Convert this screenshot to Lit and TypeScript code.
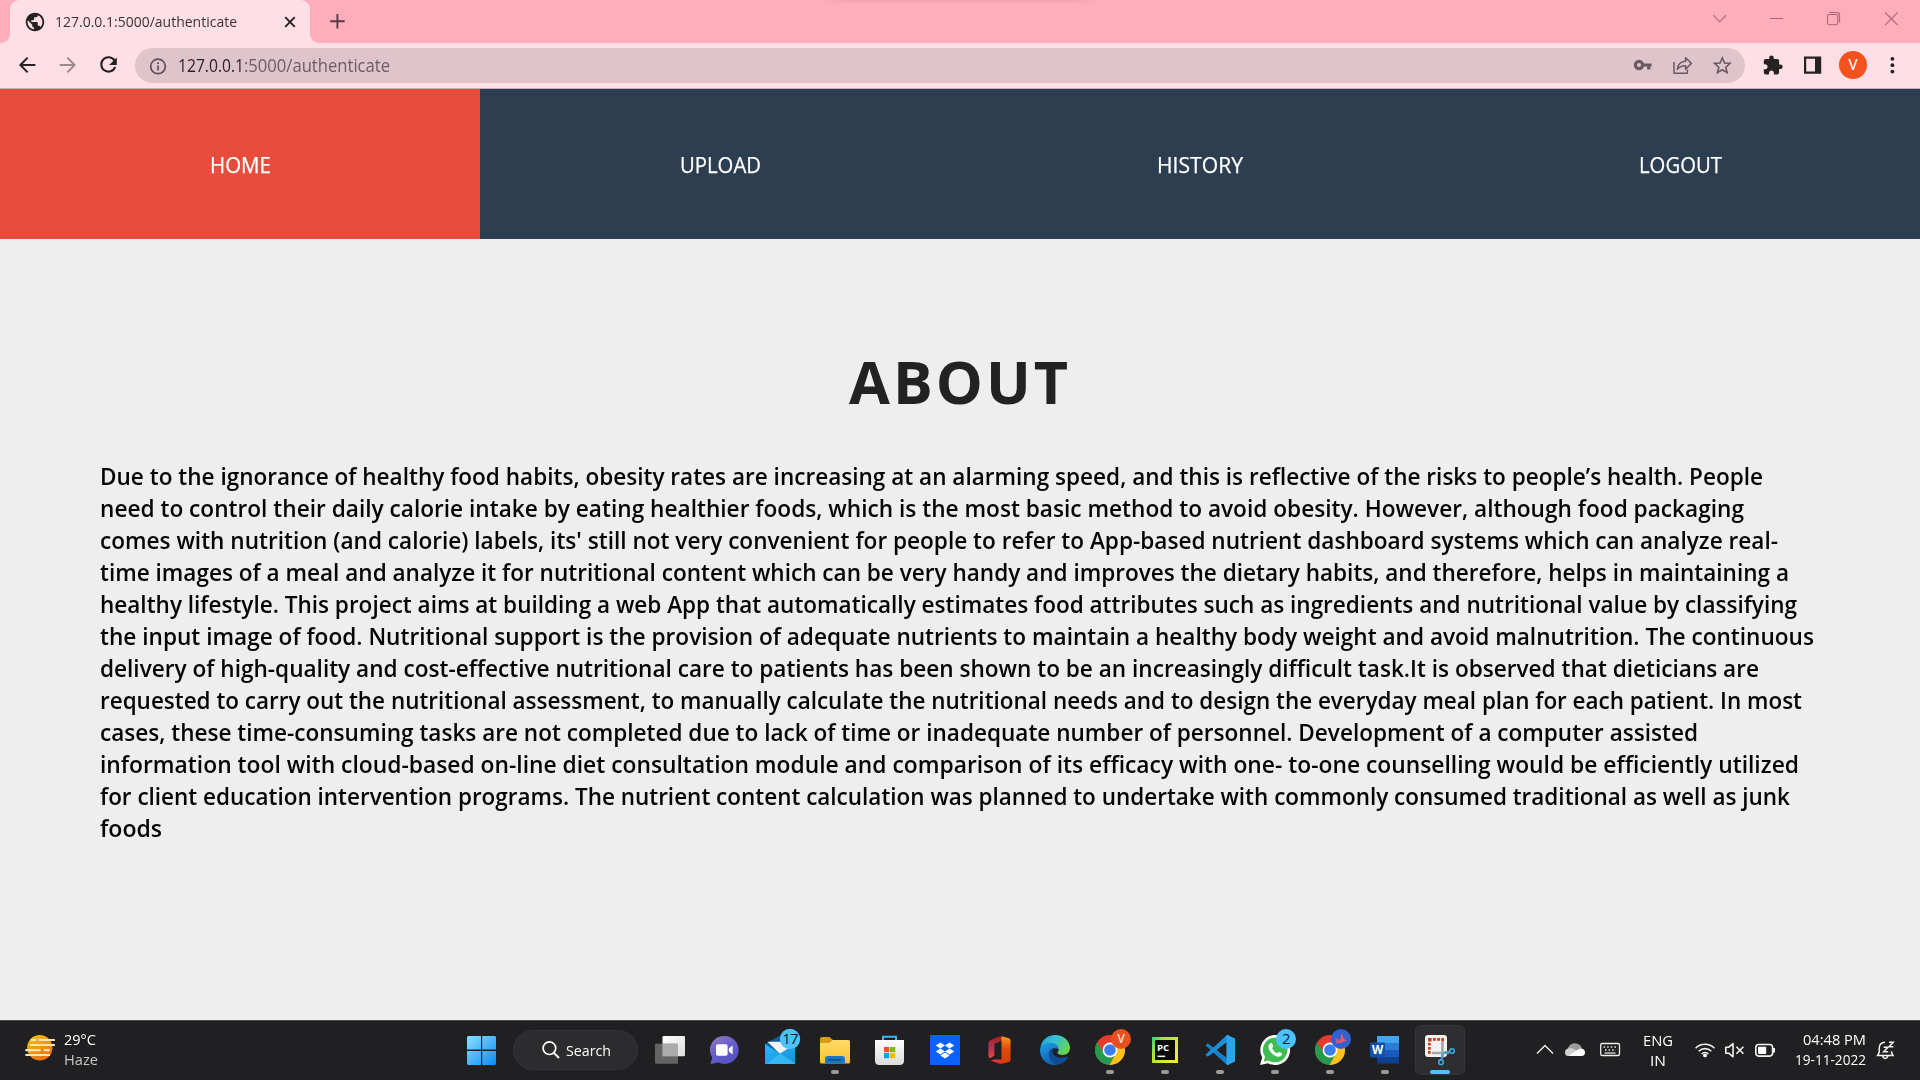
import { LitElement, html, svg, css } from "lit";
import { customElement, property } from "lit/decorators.js";

/** Text squeezed or stretched horizontally to an exact advance width. */
@customElement("fit-text")
class FitText extends LitElement {
  @property({ type: Number }) width = 100;

  static styles = css`
    :host { display: inline-block; white-space: nowrap; vertical-align: top; }
    .box { display: block; }
    .run { display: inline-block; transform-origin: 0 50%; white-space: pre; }
  `;

  updated() {
    const run = this.renderRoot.querySelector(".run") as HTMLElement;
    run.style.transform = "none";
    const natural = run.getBoundingClientRect().width;
    if (natural > 0) run.style.transform = `scaleX(${this.width / natural})`;
  }

  render() {
    return html`<span class="box" style="width:${this.width}px"><span class="run"><slot></slot></span></span>`;
  }
}

const LINES: [string, number][] = [
  ["Due to the ignorance of healthy food habits, obesity rates are increasing at an alarming speed, and this is reflective of the risks to people’s health. People", 1663],
  ["need to control their daily calorie intake by eating healthier foods, which is the most basic method to avoid obesity. However, although food packaging", 1644],
  ["comes with nutrition (and calorie) labels, its' still not very convenient for people to refer to App-based nutrient dashboard systems which can analyze real-", 1678],
  ["time images of a meal and analyze it for nutritional content which can be very handy and improves the dietary habits, and therefore, helps in maintaining a", 1689],
  ["healthy lifestyle. This project aims at building a web App that automatically estimates food attributes such as ingredients and nutritional value by classifying", 1697],
  ["the input image of food. Nutritional support is the provision of adequate nutrients to maintain a healthy body weight and avoid malnutrition. The continuous", 1714],
  ["delivery of high-quality and cost-effective nutritional care to patients has been shown to be an increasingly difficult task.It is observed that dieticians are", 1659],
  ["requested to carry out the nutritional assessment, to manually calculate the nutritional needs and to design the everyday meal plan for each patient. In most", 1702],
  ["cases, these time-consuming tasks are not completed due to lack of time or inadequate number of personnel. Development of a computer assisted", 1598],
  ["information tool with cloud-based on-line diet consultation module and comparison of its efficacy with one- to-one counselling would be efficiently utilized", 1699],
  ["for client education intervention programs. The nutrient content calculation was planned to undertake with commonly consumed traditional as well as junk", 1690],
  ["foods", 62],
];

const NAV: [string, number][] = [["HOME", 61], ["UPLOAD", 81], ["HISTORY", 86], ["LOGOUT", 83]];

const chrome = (id: string) => svg`
  <defs><clipPath id=${id}><circle cx="25" cy="25" r="15"/></clipPath></defs>
  <g clip-path="url(#${id})">
    <rect x="10" y="10" width="30" height="30" fill="#e33b2e"/>
    <path d="M8 13L12.2 17.4 19 28.5 25 32 31 28.5 24 42H8z" fill="#249b4b"/>
    <path d="M25 18H42V42H23.5L31 28.5A7 7 0 0 0 25 18z" fill="#fcc31e"/>
  </g>
  <circle cx="25" cy="25" r="7.4" fill="#fff"/><circle cx="25" cy="25" r="5.8" fill="#3b7ded"/>`;

const APPS: { icon: unknown; mark?: "run" | "active" }[] = [
  { icon: svg`
      <defs><linearGradient id="tv" x1="0" y1="0" x2="1" y2="1"><stop offset="0" stop-color="#fff"/><stop offset="1" stop-color="#dcdcdc"/></linearGradient></defs>
      <rect x="17.5" y="11" width="22.5" height="20.3" rx="1.2" fill="url(#tv)"/>
      <rect x="10" y="18.7" width="23" height="20" rx="1.2" fill="#6c6c6c" opacity=".88"/>
      <rect x="17.5" y="18.7" width="15.5" height="12.6" fill="#ababab"/>` },
  { icon: svg`
      <defs><linearGradient id="ct" x1="0" y1="0" x2=".6" y2="1"><stop offset="0" stop-color="#9a7cc4"/><stop offset=".5" stop-color="#6a5fc9"/><stop offset="1" stop-color="#5554c4"/></linearGradient></defs>
      <path d="M24.5 11A14 14 0 1 1 18.6 37.6L10.5 39 12.2 32.5A14 14 0 0 1 24.5 11z" fill="url(#ct)"/>
      <rect x="16" y="19.2" width="11.6" height="11.6" rx="1.8" fill="#fff"/>
      <path d="M28.8 23.4L32.6 20.4V29.6L28.8 26.6z" fill="#fff"/>` },
  { icon: svg`
      <defs><linearGradient id="ml" x1="0" y1="0" x2="1" y2="1"><stop offset="0" stop-color="#27b7f4"/><stop offset="1" stop-color="#1490df"/></linearGradient></defs>
      <path d="M10 19L24 11 40 19V30H10z" fill="#0b5d9e"/>
      <path d="M12.5 16.8H38V28L25 29z" fill="#f2f2f2"/>
      <path d="M10 19L25 28.5 40 19V39H10z" fill="url(#ml)"/><path d="M25 28.5L40 38V39H11z" fill="#40c4f8" opacity=".65"/>
      <circle cx="35" cy="14" r="10.2" fill="#4cc2ff"/><text x="35" y="19" class="badge">17</text>` },
  { mark: "run", icon: svg`
      <defs><linearGradient id="fe" x1="0" y1="0" x2="0" y2="1"><stop offset="0" stop-color="#ffdb69"/><stop offset="1" stop-color="#f8c32f"/></linearGradient></defs>
      <path d="M10 14Q10 12 12 12H19.5L23 15V20H10z" fill="#d79b18"/>
      <path d="M10 18H19L23 15H38.5Q40 15 40 16.5V37Q40 38.5 38.5 38.5H11.5Q10 38.5 10 37z" fill="url(#fe)"/>
      <path d="M15 38.5V34Q15 31 18 31H32Q35 31 35 34V38.5z" fill="#1678c2"/><rect x="18" y="34" width="14" height="1.6" rx=".8" fill="#0e4f8b"/>` },
  { icon: svg`
      <defs><linearGradient id="st" x1="0" y1="0" x2="0" y2="1"><stop offset="0" stop-color="#fdfdfd"/><stop offset="1" stop-color="#dcdcdc"/></linearGradient></defs>
      <path d="M18 17V11.8H31V17" fill="none" stroke="#3ab6ea" stroke-width="2"/>
      <path d="M10 15H39V35.5Q39 40 34.5 40H14.5Q10 40 10 35.5z" fill="url(#st)"/>
      <rect x="19" y="22" width="5.2" height="5.2" fill="#f25022"/><rect x="25" y="22" width="5.2" height="5.2" fill="#7fba00"/>
      <rect x="19" y="28" width="5.2" height="5.2" fill="#00a4ef"/><rect x="25" y="28" width="5.2" height="5.2" fill="#ffb900"/>` },
  { icon: svg`
      <rect x="10" y="10" width="30" height="30" fill="#0b62fb"/>
      <path d="M20.4 17.4L25 20.4 20.4 23.4 15.8 20.4zM29.6 17.4L34.2 20.4 29.6 23.4 25 20.4zM20.4 23.4L25 26.4 20.4 29.4 15.8 26.4zM29.6 23.4L34.2 26.4 29.6 29.4 25 26.4zM25 27.6L29.6 30.4 25 33.4 20.4 30.4z" fill="#fff"/>` },
  { icon: svg`
      <defs><linearGradient id="o1" x1="0" y1="0" x2="0" y2="1"><stop offset="0" stop-color="#b01c1c"/><stop offset=".5" stop-color="#a8355a"/><stop offset="1" stop-color="#e6463c"/></linearGradient>
      <linearGradient id="o2" x1="0" y1="0" x2="0" y2="1"><stop offset="0" stop-color="#ff9a1c"/><stop offset=".45" stop-color="#e04a10"/><stop offset="1" stop-color="#d83b01"/></linearGradient></defs>
      <path d="M25 11.2L32 13 24.8 16.4 19.4 18.8V30.4L16.6 32.4Q13.4 34 13.4 30.5V18.5Q13.4 16 15.5 14.9z" fill="url(#o1)"/>
      <path d="M18 34.6H27V38.8L24 38.4 16 35.8z" fill="#e8323c"/>
      <path d="M26.5 11.2L34 13.2Q35.6 13.8 35.6 15.5V34.8Q35.6 36.4 34 36.9L26.5 38.8z" fill="url(#o2)"/>` },
  { icon: svg`
      <defs><linearGradient id="e1" x1="0" y1="0" x2="1" y2=".5"><stop offset="0" stop-color="#1f9fdc"/><stop offset=".5" stop-color="#35c1d6"/><stop offset="1" stop-color="#66d34e"/></linearGradient>
      <linearGradient id="e2" x1="0" y1="0" x2=".4" y2="1"><stop offset="0" stop-color="#1ea0e6"/><stop offset="1" stop-color="#1260b4"/></linearGradient></defs>
      <path d="M10.4 23C11.2 15.4 17.4 10 25 10 33.6 10 40 16 40 22.8 40 27.6 36.4 30 32.6 30 29.6 30 27.4 29 27.4 27.8 27.4 27 28.6 26.4 28.6 24.4 28.6 21.4 25.4 18.6 20.6 18.6 15.6 18.6 12 20.6 10.4 23z" fill="url(#e1)"/>
      <path d="M10 25C10 20.6 15 17.8 20.4 17.8 25.4 17.8 28.8 21 28.6 24.4 24 21.4 19.4 24.4 19.4 29 19.4 34.6 24 39 28.4 39.6 18.2 42 10 34.6 10 25z" fill="url(#e2)"/>
      <path d="M24 23C20.4 23.4 18.8 26 18.8 29 18.8 34.6 23.4 39.6 28.2 39.6 33 38.8 36.2 35.8 37.8 32.8 38.2 32 37.4 31.4 36.6 31.8 31 34.4 22.6 32 22.6 26.4 22.6 25 23.2 23.8 24 23z" fill="#0f4c94"/>` },
  { mark: "run", icon: svg`${chrome("c1")}
      <circle cx="36" cy="14" r="10" fill="#e8501f"/><text x="36" y="18.4" class="av">V</text>` },
  { mark: "run", icon: svg`
      <defs><linearGradient id="py" x1="0" y1="0" x2="1" y2=".7"><stop offset="0" stop-color="#21d789"/><stop offset=".3" stop-color="#a6e03c"/><stop offset="1" stop-color="#f0ea3a"/></linearGradient></defs>
      <rect x="12" y="12" width="26" height="26" fill="url(#py)"/><rect x="15" y="15" width="20" height="20" fill="#0a0a0a"/>
      <text x="17" y="25.8" class="pc">PC</text><rect x="17.6" y="30.6" width="7.6" height="1.5" fill="#fff"/>` },
  { mark: "run", icon: svg`
      <path d="M32.5 10L40 13.4V36.6L32.5 40z" fill="#2ba5ec"/>
      <path d="M10.4 20.2L12.8 18.2 34 34.4V39.4L31.4 39.4z" fill="#1380c8"/>
      <path d="M10.4 29.8L12.8 31.8 34 15.6V10.4L31.4 10.6z" fill="#1d8fd8"/>
      <path d="M32.6 10L34 10.6V39.4L32.6 40 31.4 39V11z" fill="#2ba5ec"/>` },
  { mark: "run", icon: svg`
      <path d="M25 10A15 15 0 1 1 18 38.2L10 40 12.2 32.4A15 15 0 0 1 25 10z" fill="#fff"/>
      <path d="M25 12.7A12.3 12.3 0 1 1 18.6 35.4L13.8 36.4 15 31.8A12.3 12.3 0 0 1 25 12.7z" fill="#3fbd50"/>
      <path d="M20.6 18.2C21.4 17.8 22 18 22.2 18.6L23.2 21.2C23.4 21.8 22 23 22.2 23.4 23.4 25.8 25 27.2 27.2 28.2 27.8 28.4 28.6 26.8 29.2 27L31.8 28.2C32.6 28.8 31.6 31.6 28.8 31.8 24 31.6 18.6 26.2 18.4 21.4 18.6 19.6 19.4 18.6 20.6 18.2z" fill="#fff"/>
      <circle cx="36" cy="14" r="10" fill="#4cc2ff"/><text x="36" y="19" class="badge">2</text>` },
  { mark: "run", icon: svg`${chrome("c2")}
      <circle cx="36" cy="14" r="10" fill="#3161d1"/><path d="M36.5 7.6L38.6 13.8 42 15.2 36.6 17.8 30 18.6 35.4 14.6z" fill="#e8566a"/><path d="M29.8 12.4L36.4 15.8 32 18.4z" fill="#c8557f"/>` },
  { mark: "run", icon: svg`
      <rect x="17" y="11" width="22" height="7" fill="#41a5ee"/><rect x="17" y="18" width="22" height="7" fill="#2b7cd3"/>
      <rect x="17" y="25" width="22" height="7" fill="#185abd"/><rect x="17" y="32" width="22" height="6.5" fill="#103f91"/>
      <rect x="10" y="17.4" width="15" height="15" rx="1.2" fill="#164faa"/><text x="17.5" y="29.2" class="wd">W</text>` },
  { mark: "active", icon: svg`
      <rect x=".5" y=".5" width="49" height="49" rx="5" fill="#2e2e30" stroke="#353537"/>
      <rect x="10" y="10" width="22" height="22" rx="3" fill="#f3f3f3"/>
      <g fill="#c9401f"><path d="M13 13h3.6v3.4H13zM18 13h2.8v2.8H18zM22.2 13h2.8v2.8h-2.8zM26.2 13h2.8v3.4h-2.8zM13 17.8h2.8v2.8H13zM13 22h2.8v2.8H13zM13 26h2.8v2.8H13z"/></g>
      <path d="M17 28H34M27.4 17V33" stroke="#9a9a9a" stroke-width="2.6" opacity=".85"/>
      <path d="M28 28L35 26.6M27.6 29L26.4 34.6" stroke="#3a9fd4" stroke-width="2"/>
      <circle cx="37" cy="26" r="2.3" fill="none" stroke="#3da9e0" stroke-width="1.6"/>
      <circle cx="26" cy="37.2" r="2.3" fill="none" stroke="#3da9e0" stroke-width="1.6"/>` },
];

@customElement("app-root")
class AppRoot extends LitElement {
  static styles = css`
    :host { display: flex; flex-direction: column; width: 1920px; height: 1080px; overflow: hidden; background: #eee;
      font-family: "Open Sans", "Noto Sans", sans-serif; color: #222; }
    * { box-sizing: border-box; }
    svg { display: block; flex: none; }

    .strip { display: flex; height: 43px; background: #ffadbb; flex: none; }
    .tabs { display: flex; width: 560px; }
    .shade { display: flex; justify-content: center; width: 800px; height: 10px; overflow: hidden; }
    .shade-core { width: 276px; height: 5px; background: linear-gradient(90deg, #f2a2b000, #f2a2b0 8%, #f2a2b0 92%, #f2a2b000); mask-image: linear-gradient(#000, transparent); }
    .tab-edge { width: 10px; background: #ffdfe6; }
    .tab-edge i { display: block; width: 10px; height: 43px; background: #ffadbb; border-bottom-right-radius: 9px; }
    .tab-edge.right i { border-radius: 0 0 0 9px; }
    .tab-wrap { background: #ffadbb; }
    .tab { display: flex; width: 300px; height: 43px; background: #ffdfe6; align-items: center; padding-left: 15px; border-radius: 9px 9px 0 0; }
    .tab-title { margin-left: 10px; font-size: 15px; line-height: 40px; height: 42px; color: #3b3236; width: 229px; }
    .new-tab { margin-left: 10px; }
    .win { display: flex; width: 560px; justify-content: flex-end; }

    .toolbar { display: flex; height: 46px; align-items: flex-start; background: #ffdfe6; border-bottom: 1px solid #c4b0b8; flex: none; }
    .nav-icons { width: 135px; }
    .omni { display: flex; align-items: center; width: 1610px; height: 35px; margin-top: 5px; border-radius: 18px; background: #dfc5cb; }
    .omni-info { margin-left: 13px; }
    .url { margin-left: 10px; display: flex; font-size: 17.4px; line-height: 35px; width: 1435px; color: #6b5d63; }
    .url .host { color: #2b2326; }
    .ava { font: 400 15px Roboto, sans-serif; fill: #fff; text-anchor: middle; }

    .nav { display: grid; grid-template-columns: repeat(4, 1fr); height: 150px; background: #2d3e50; flex: none; }
    .nav-item { display: flex; justify-content: center; height: 150px; padding-top: 1px; font-size: 22.4px; line-height: 149px; font-weight: 500; color: #fff; -webkit-text-stroke: .25px #fff; }
    .nav-item.on { background: #e84c3d; }

    .about { flex: 1; padding: 102px 100px 0; min-height: 0; }
    .title { display: flex; justify-content: center; margin: 0 0 39px; font-size: 58.8px; line-height: 80px; font-weight: 700; letter-spacing: 3px; color: #222; }
    .body { font-size: 23.2px; line-height: 32px; font-weight: 570; color: #050505; }
    .line { display: block; height: 32px; }

    .bar { display: flex; height: 60px; background: #202022; border-top: 1px solid #47494b; color: #fff; flex: none; font-size: 15px; line-height: 20px; }
    .weather { display: flex; width: 456px; padding: 8px 0 0 25px; gap: 9px; }
    .weather svg { margin-top: 5px; }
    .two { display: flex; flex-direction: column; }
    .dim { color: #c8c8c8; }
    .apps { display: flex; padding-top: 4px; gap: 5px; }
    .cell { display: flex; flex-direction: column; align-items: center; width: 50px; height: 50px; }
    .mark { width: 8px; height: 4px; border-radius: 2px; margin-top: -5px; background: #9b9b9b; z-index: 1; }
    .mark.active { width: 20px; background: #4cc2ff; }
    .search { display: flex; align-items: center; width: 125px; height: 40px; margin: 5px 2px 0; padding-left: 28px; gap: 6px; border: 1px solid #343436; border-radius: 20px; background: #2c2c2e; }
    .badge { font: 15px "Open Sans", sans-serif; fill: #10222c; text-anchor: middle; letter-spacing: -.8px; }
    .av { font: 500 12px Roboto, sans-serif; fill: #fbd5c6; text-anchor: middle; }
    .pc { font: 700 9.6px "Open Sans", sans-serif; fill: #fff; }
    .wd { font: 700 11.6px "Open Sans", sans-serif; fill: #fff; text-anchor: middle; }
    .tray { display: flex; flex: 1; padding: 8px 0 0 69px; }
    .lang { width: 34px; align-items: center; margin: 1px 18px 0 13px; }
    .clock { width: 72px; align-items: flex-end; margin: 0 4px 0 13px; }
    .tray > svg { margin-top: 6px; }
  `;

  private strip() {
    return html`<div class="strip">
      <div class="tabs">
        <div class="tab-edge"><i></i></div>
        <div class="tab-wrap"><div class="tab">
          <svg width="20" height="20" viewBox="1.2 1.2 21.6 21.6"><path fill="#26221f" d="M12 2C6.48 2 2 6.48 2 12s4.48 10 10 10 10-4.48 10-10S17.52 2 12 2zm-1 17.93c-3.95-.49-7-3.85-7-7.93 0-.62.08-1.21.21-1.79L9 15v1c0 1.1.9 2 2 2v1.93zm6.9-2.54c-.26-.81-1-1.39-1.9-1.39h-1v-3c0-.55-.45-1-1-1H8v-2h2c.55 0 1-.45 1-1V7h2c1.1 0 2-.9 2-2v-.41c2.93 1.19 5 4.06 5 7.41 0 2.08-.8 3.97-2.1 5.39z"/></svg>
          <div class="tab-title"><fit-text .width=${182}>127.0.0.1:5000/authenticate</fit-text></div>
          <svg width="12" height="12" viewBox="0 0 12 12"><path d="M1.2 1.2l9.6 9.6M10.8 1.2l-9.6 9.6" stroke="#26221f" stroke-width="1.9"/></svg>
        </div></div>
        <div class="tab-edge right"><i></i></div>
        <svg class="new-tab" width="16" height="42" viewBox="0 0 16 42"><path d="M.2 21.3h14.5M7.4 14v14.6" stroke="#5a3a42" stroke-width="1.9"/></svg>
      </div>
      <div class="shade"><div class="shade-core"></div></div>
      <div class="win"><svg width="220" height="43" viewBox="1700 0 220 43" fill="none" stroke="#a9667a" stroke-width="1.1">
        <path d="M1713.3 15.2l6.4 6.6 6.4-6.6M1770 18.5h13M1885 12.4l12.8 12.8M1897.8 12.4L1885 25.2"/>
        <rect x="1827.5" y="14.5" width="10.2" height="10.2" rx="1.6"/><path d="M1829.6 12.5h7.4q2.6 0 2.6 2.6v7.4"/>
      </svg></div>
    </div>`;
  }

  private toolbar() {
    return html`<div class="toolbar">
      <svg class="nav-icons" width="135" height="45" viewBox="0 43 135 45" fill="none" stroke="#26221f" stroke-width="2">
        <path d="M35.4 65H20.6M27.6 57.6L20.4 65l7.2 7.4"/>
        <path d="M59.6 65h14.8M67.4 57.6l7.2 7.4-7.2 7.4" stroke="#9d8a90"/>
        <path d="M114.6 60.6A7.2 7.2 0 1 0 115.2 67" stroke-width="2.1"/><path d="M116.8 57.4v7.6h-7.6z" fill="#26221f" stroke="none"/>
      </svg>
      <div class="omni">
        <svg class="omni-info" width="20" height="20" viewBox="0 0 20 20"><circle cx="10" cy="10.4" r="7.3" fill="none" stroke="#5d5155" stroke-width="1.7"/><path d="M10 9.4v5M10 6.2v1.8" stroke="#5d5155" stroke-width="1.8"/></svg>
        <div class="url"><fit-text class="host" .width=${66}>127.0.0.1</fit-text><fit-text .width=${146}>:5000/authenticate</fit-text></div>
        <svg width="132" height="35" viewBox="1613 48 132 35" fill="none" stroke="#685a60" stroke-width="1.6">
          <circle cx="1639" cy="65" r="3.6" stroke-width="3.2"/><path d="M1643 65h8.6M1648.8 65v4.6" stroke-width="3.2"/>
          <path d="M1674 62v11.2h13.4v-3.6M1677.4 69.4q.6-7.8 8.2-8.2v-3.4l5.8 5.6-5.8 5.8v-3.4q-5.2-.2-8.2 3.6z" stroke-width="1.5" stroke-linejoin="round"/>
          <path d="M1722.3 57.9l2.2 5.1 5.5.5-4.2 3.7 1.3 5.4-4.8-2.9-4.8 2.9 1.3-5.4-4.2-3.7 5.5-.5z"/>
        </svg>
      </div>
      <svg width="175" height="45" viewBox="1745 43 175 45">
        <path transform="translate(1762 54.6) scale(.9)" fill="#26221f" d="M20.5 11H19V7c0-1.1-.9-2-2-2h-4V3.5a2.5 2.5 0 0 0-5 0V5H4c-1.1 0-2 .9-2 2v3.8h1.5c1.49 0 2.7 1.21 2.7 2.7s-1.21 2.7-2.7 2.7H2V20c0 1.1.9 2 2 2h3.8v-1.5c0-1.49 1.21-2.7 2.7-2.7s2.7 1.21 2.7 2.7V22H17c1.1 0 2-.9 2-2v-4h1.5a2.5 2.5 0 0 0 0-5z"/>
        <path fill="#26221f" fill-rule="evenodd" d="M1804 56.4h17.2V73.8H1804zM1806.2 58.8V71.4H1815V58.8z"/>
        <circle cx="1853" cy="65" r="14" fill="#f4511e"/><text x="1853" y="70.4" class="ava">V</text>
        <g fill="#26221f"><circle cx="1892.4" cy="58.8" r="1.9"/><circle cx="1892.4" cy="65.2" r="1.9"/><circle cx="1892.4" cy="71.6" r="1.9"/></g>
      </svg>
    </div>`;
  }

  private taskbar() {
    return html`<div class="bar">
      <div class="weather">
        <svg width="30" height="28" viewBox="0 0 30 28">
          <defs><linearGradient id="sun" x1="0" y1="0" x2=".6" y2="1"><stop offset="0" stop-color="#f9c80e"/><stop offset="1" stop-color="#ea7014"/></linearGradient></defs>
          <circle cx="14.8" cy="13.7" r="12.7" fill="url(#sun)"/>
          <g stroke="#fbe6b0" stroke-width="2.2" stroke-linecap="round"><path d="M6.5 6h4M14.5 6h14.5M6 11h23M1.2 16.2h13.6M19.8 16.2h4M1.2 21h23"/></g>
        </svg>
        <div class="two"><fit-text .width=${32}>29°C</fit-text><fit-text class="dim" .width=${34}>Haze</fit-text></div>
      </div>
      <div class="apps">
        <div class="cell"><svg width="50" height="50" viewBox="0 0 50 50">
          <defs><linearGradient id="wg" gradientUnits="userSpaceOnUse" x1="11" y1="11" x2="40" y2="40"><stop offset="0" stop-color="#8ae0ff"/><stop offset="1" stop-color="#0a8cf5"/></linearGradient></defs>
          <path fill="url(#wg)" d="M12 11H25V24.6H11V12zM26.2 11H39L40 12V24.6H26.2zM11 25.9H25V40H12L11 39zM26.2 25.9H40V39L39 40H26.2z"/></svg></div>
        <div class="search">
          <svg width="18" height="20" viewBox="0 0 18 20"><circle cx="7.4" cy="8.2" r="6.3" fill="none" stroke="#fff" stroke-width="1.7"/><path d="M12 13l5 5" stroke="#fff" stroke-width="2"/></svg>
          <fit-text .width=${45}>Search</fit-text>
        </div>
        ${APPS.map(a => html`<div class="cell"><svg width="50" height="50" viewBox="0 0 50 50">${a.icon}</svg>${a.mark ? html`<span class="mark ${a.mark}"></span>` : ""}</div>`)}
      </div>
      <div class="tray">
        <svg width="94" height="30" viewBox="1534 1035 94 30">
          <path d="M1537 1053.6l8-8 8 8" fill="none" stroke="#eee" stroke-width="1.4"/>
          <path d="M1567.5 1050C1568 1046 1571 1043.2 1575 1043.2 1578.6 1043.2 1581 1045.4 1582 1048.4L1574 1052z" fill="#9b9b9b"/>
          <path d="M1568 1056Q1565 1055.6 1565 1052.4 1565 1048.6 1569 1048.2L1572 1048.2 1580 1052z" fill="#cfcfcf"/>
          <path d="M1568 1056L1575 1051.4 1580 1048.6Q1585 1048.6 1585 1052.4 1585 1055.6 1581.5 1056z" fill="#fff"/>
          <rect x="1600.7" y="1043.5" width="18.8" height="12" rx="1.6" fill="none" stroke="#eee" stroke-width="1.3"/>
          <path d="M1603.6 1047h13M1605 1050h11" stroke="#eee" stroke-width="1.5" stroke-dasharray="1.5 2.1"/><path d="M1604.5 1053h11" stroke="#eee" stroke-width="1.2"/>
        </svg>
        <div class="two lang"><fit-text .width=${30}>ENG</fit-text><fit-text .width=${16}>IN</fit-text></div>
        <svg width="88" height="30" viewBox="1693 1035 88 30" fill="none" stroke="#f2f2f2" stroke-width="1.6">
          <path d="M1695.6 1048.2a13.2 13.2 0 0 1 18.8 0M1698.7 1051.2a9 9 0 0 1 12.6 0M1701.6 1054a5 5 0 0 1 6.8 0"/><circle cx="1705" cy="1055.4" r="1.9" fill="#fff" stroke="none"/>
          <path d="M1725.8 1047.2h3l4.2-3.6v13.2l-4.2-3.6h-3z" stroke-linejoin="round"/><path d="M1736.4 1046.8l7 7M1743.4 1046.8l-7 7"/>
          <rect x="1755.8" y="1044.5" width="16.8" height="11.6" rx="3"/><rect x="1758" y="1046.7" width="8.2" height="7.2" rx=".8" fill="#fff" stroke="none"/><path d="M1774 1048v4.4" stroke-width="2"/>
        </svg>
        <div class="two clock"><fit-text .width=${63}>04:48 PM</fit-text><fit-text .width=${71}>19-11-2022</fit-text></div>
        <svg width="30" height="30" viewBox="1870 1035 30 30" fill="none" stroke="#f2f2f2" stroke-width="1.5">
          <path d="M1885 1042.2q-5.8.4-5.8 6v4.2l-1.6 3.2h15.4l-1.4-3v-1.4M1882.6 1056q.4 2.4 2.6 2.4t2.6-2.4"/>
          <path d="M1883.6 1047.2h4.4l-4.4 4.6h4.6M1889 1042.2h4.2l-4.2 4.6h4.4"/>
        </svg>
      </div>
    </div>`;
  }

  render() {
    return html`
      ${this.strip()}
      ${this.toolbar()}
      <nav class="nav">${NAV.map(([label, w], i) => html`<div class="nav-item ${i === 0 ? "on" : ""}"><fit-text .width=${w}>${label}</fit-text></div>`)}</nav>
      <main class="about">
        <h1 class="title"><fit-text .width=${222}>ABOUT</fit-text></h1>
        <div class="body">${LINES.map(([t, w]) => html`<div class="line"><fit-text .width=${w}>${t}</fit-text></div>`)}</div>
      </main>
      ${this.taskbar()}`;
  }
}
